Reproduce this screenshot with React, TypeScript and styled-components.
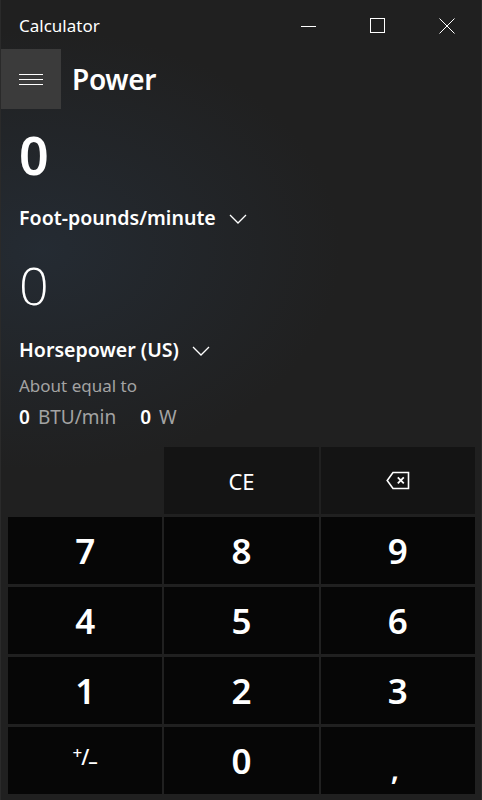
import React from 'react';
import styled, { createGlobalStyle } from 'styled-components';

const GlobalStyle = createGlobalStyle`
  html, body {
    margin: 0;
    padding: 0;
    background: #202020;
  }
  * {
    box-sizing: border-box;
  }
`;

const Window = styled.div`
  width: 482px;
  height: 800px;
  display: flex;
  flex-direction: column;
  background-color: #202020;
  background-image: radial-gradient(ellipse 300px 220px at 40px 250px, rgba(40, 52, 66, 0.55), rgba(32, 32, 32, 0) 100%);
  border-left: 1px solid #2a2a2a;
  border-right: 1px solid #2a2a2a;
  color: #fff;
  font-family: 'Noto Sans', 'Open Sans', sans-serif;
  overflow: hidden;
`;

const TitleBar = styled.div`
  display: flex;
  align-items: center;
  height: 49px;
  padding-left: 18px;
`;

const AppTitle = styled.div`
  flex: 1;
  font-size: 17px;
  line-height: 20px;
  color: #fff;
  margin-top: 2px;
`;

const CaptionButton = styled.div`
  width: 69px;
  height: 49px;
  display: flex;
  align-items: center;
  justify-content: center;
  padding-top: 2px;

  svg {
    display: block;
  }
`;

const Header = styled.div`
  display: flex;
  align-items: center;
  height: 60px;
  gap: 11px;
`;

const MenuButton = styled.div`
  width: 60px;
  height: 60px;
  background: #3b3b3b;
  display: flex;
  flex-direction: column;
  align-items: center;
  justify-content: center;
  gap: 4px;
`;

const MenuLine = styled.span`
  display: block;
  width: 24px;
  height: 1px;
  background: #fff;
`;

const ModeTitle = styled.h1`
  margin: 0;
  font-size: 28px;
  font-weight: 600;
  line-height: 36px;
  letter-spacing: -0.3px;
`;

const Display = styled.div`
  display: flex;
  flex-direction: column;
  padding-left: 18px;
`;

const Value = styled.div<{ $light?: boolean; $top: number }>`
  margin-top: ${({ $top }) => $top}px;
  height: 60px;
  font-size: 52px;
  line-height: 60px;
  font-family: ${({ $light }) => ($light ? "'Open Sans', 'Noto Sans', sans-serif" : 'inherit')};
  font-weight: ${({ $light }) => ($light ? 300 : 600)};
`;

const UnitPicker = styled.div<{ $top: number }>`
  margin-top: ${({ $top }) => $top}px;
  display: flex;
  align-items: center;
  gap: 13px;
  height: 30px;
  font-size: 19.6px;
  line-height: 30px;
  font-weight: 600;

  svg {
    display: block;
    margin-top: 2px;
  }
`;

const AboutLabel = styled.div`
  margin-top: 10px;
  font-size: 17px;
  line-height: 22px;
  color: #a3a3a3;
`;

const Equivalents = styled.div`
  margin-top: 7px;
  display: flex;
  gap: 24px;
  font-size: 19px;
  line-height: 26px;
`;

const Equivalent = styled.span`
  display: flex;
  gap: 8px;
  color: #a3a3a3;

  b {
    color: #fff;
    font-weight: 600;
  }
`;

const Keypad = styled.div`
  margin-top: auto;
  display: grid;
  grid-template-columns: repeat(3, 1fr);
  grid-auto-rows: 67px;
  column-gap: 2px;
  row-gap: 3px;
  padding: 0 6px 6px 7px;
`;

const Key = styled.button<{ $kind?: 'digit' | 'op' | 'blank' }>`
  border: none;
  margin: 0;
  padding: 0;
  display: flex;
  align-items: center;
  justify-content: center;
  color: #fff;
  font-family: 'Noto Sans', 'Open Sans', sans-serif;
  background: ${({ $kind }) =>
    $kind === 'op' ? '#141414' : $kind === 'blank' ? 'transparent' : '#060606'};
  font-size: ${({ $kind }) => ($kind === 'op' ? '22px' : '35px')};
  font-weight: ${({ $kind }) => ($kind === 'op' ? 400 : 600)};
  line-height: 1;
`;

const Comma = styled.span`
  display: block;
  margin-top: 16px;
  margin-right: 6px;
  font-size: 30px;
`;

const PlusMinus = styled.span`
  display: flex;
  align-items: center;
  font-size: 21px;
  font-weight: 500;
  margin-top: -6px;

  sup {
    font-size: 17px;
    vertical-align: baseline;
    position: relative;
    top: -5px;
    margin-right: -1px;
  }

  sub {
    font-size: 19px;
    position: relative;
    top: 4px;
    margin-left: -1px;
  }
`;

const Chevron = () => (
  <svg width="18" height="10" viewBox="0 0 18 10" fill="none">
    <path d="M1 1l8 8 8-8" stroke="#fff" strokeWidth="1.3" />
  </svg>
);

const BackspaceIcon = () => (
  <svg width="24" height="19" viewBox="0 0 24 19" fill="none">
    <path d="M7 1.5h15.5v16H7L1.2 9.5z" stroke="#fff" strokeWidth="1.6" strokeLinejoin="miter" />
    <path d="M11.8 6.3l6 6M17.8 6.3l-6 6" stroke="#fff" strokeWidth="1.8" />
  </svg>
);

export default function App() {
  const digits = ['7', '8', '9', '4', '5', '6', '1', '2', '3'];

  return (
    <>
      <GlobalStyle />
      <Window>
        <TitleBar>
          <AppTitle>Calculator</AppTitle>
          <CaptionButton>
            <svg width="16" height="16" viewBox="0 0 16 16">
              <path d="M0 8.5h15" stroke="#fff" strokeWidth="1" />
            </svg>
          </CaptionButton>
          <CaptionButton>
            <svg width="16" height="16" viewBox="0 0 16 16">
              <rect x="0.5" y="0.5" width="14" height="14" fill="none" stroke="#fff" strokeWidth="1" />
            </svg>
          </CaptionButton>
          <CaptionButton>
            <svg width="16" height="16" viewBox="0 0 16 16">
              <path d="M0.5 0.5l15 15M15.5 0.5l-15 15" stroke="#fff" strokeWidth="1" />
            </svg>
          </CaptionButton>
        </TitleBar>

        <Header>
          <MenuButton>
            <MenuLine />
            <MenuLine />
            <MenuLine />
          </MenuButton>
          <ModeTitle>Power</ModeTitle>
        </Header>

        <Display>
          <Value $top={16}>0</Value>
          <UnitPicker $top={18}>
            Foot-pounds/minute <Chevron />
          </UnitPicker>
          <Value $top={22} $light>0</Value>
          <UnitPicker $top={20}>
            Horsepower (US) <Chevron />
          </UnitPicker>
          <AboutLabel>About equal to</AboutLabel>
          <Equivalents>
            <Equivalent><b>0</b>BTU/min</Equivalent>
            <Equivalent><b>0</b>W</Equivalent>
          </Equivalents>
        </Display>

        <Keypad>
          <Key $kind="blank" />
          <Key $kind="op">CE</Key>
          <Key $kind="op"><BackspaceIcon /></Key>
          {digits.map((d) => (
            <Key key={d}>{d}</Key>
          ))}
          <Key>
            <PlusMinus><sup>+</sup>/<sub>–</sub></PlusMinus>
          </Key>
          <Key>0</Key>
          <Key><Comma>,</Comma></Key>
        </Keypad>
      </Window>
    </>
  );
}
